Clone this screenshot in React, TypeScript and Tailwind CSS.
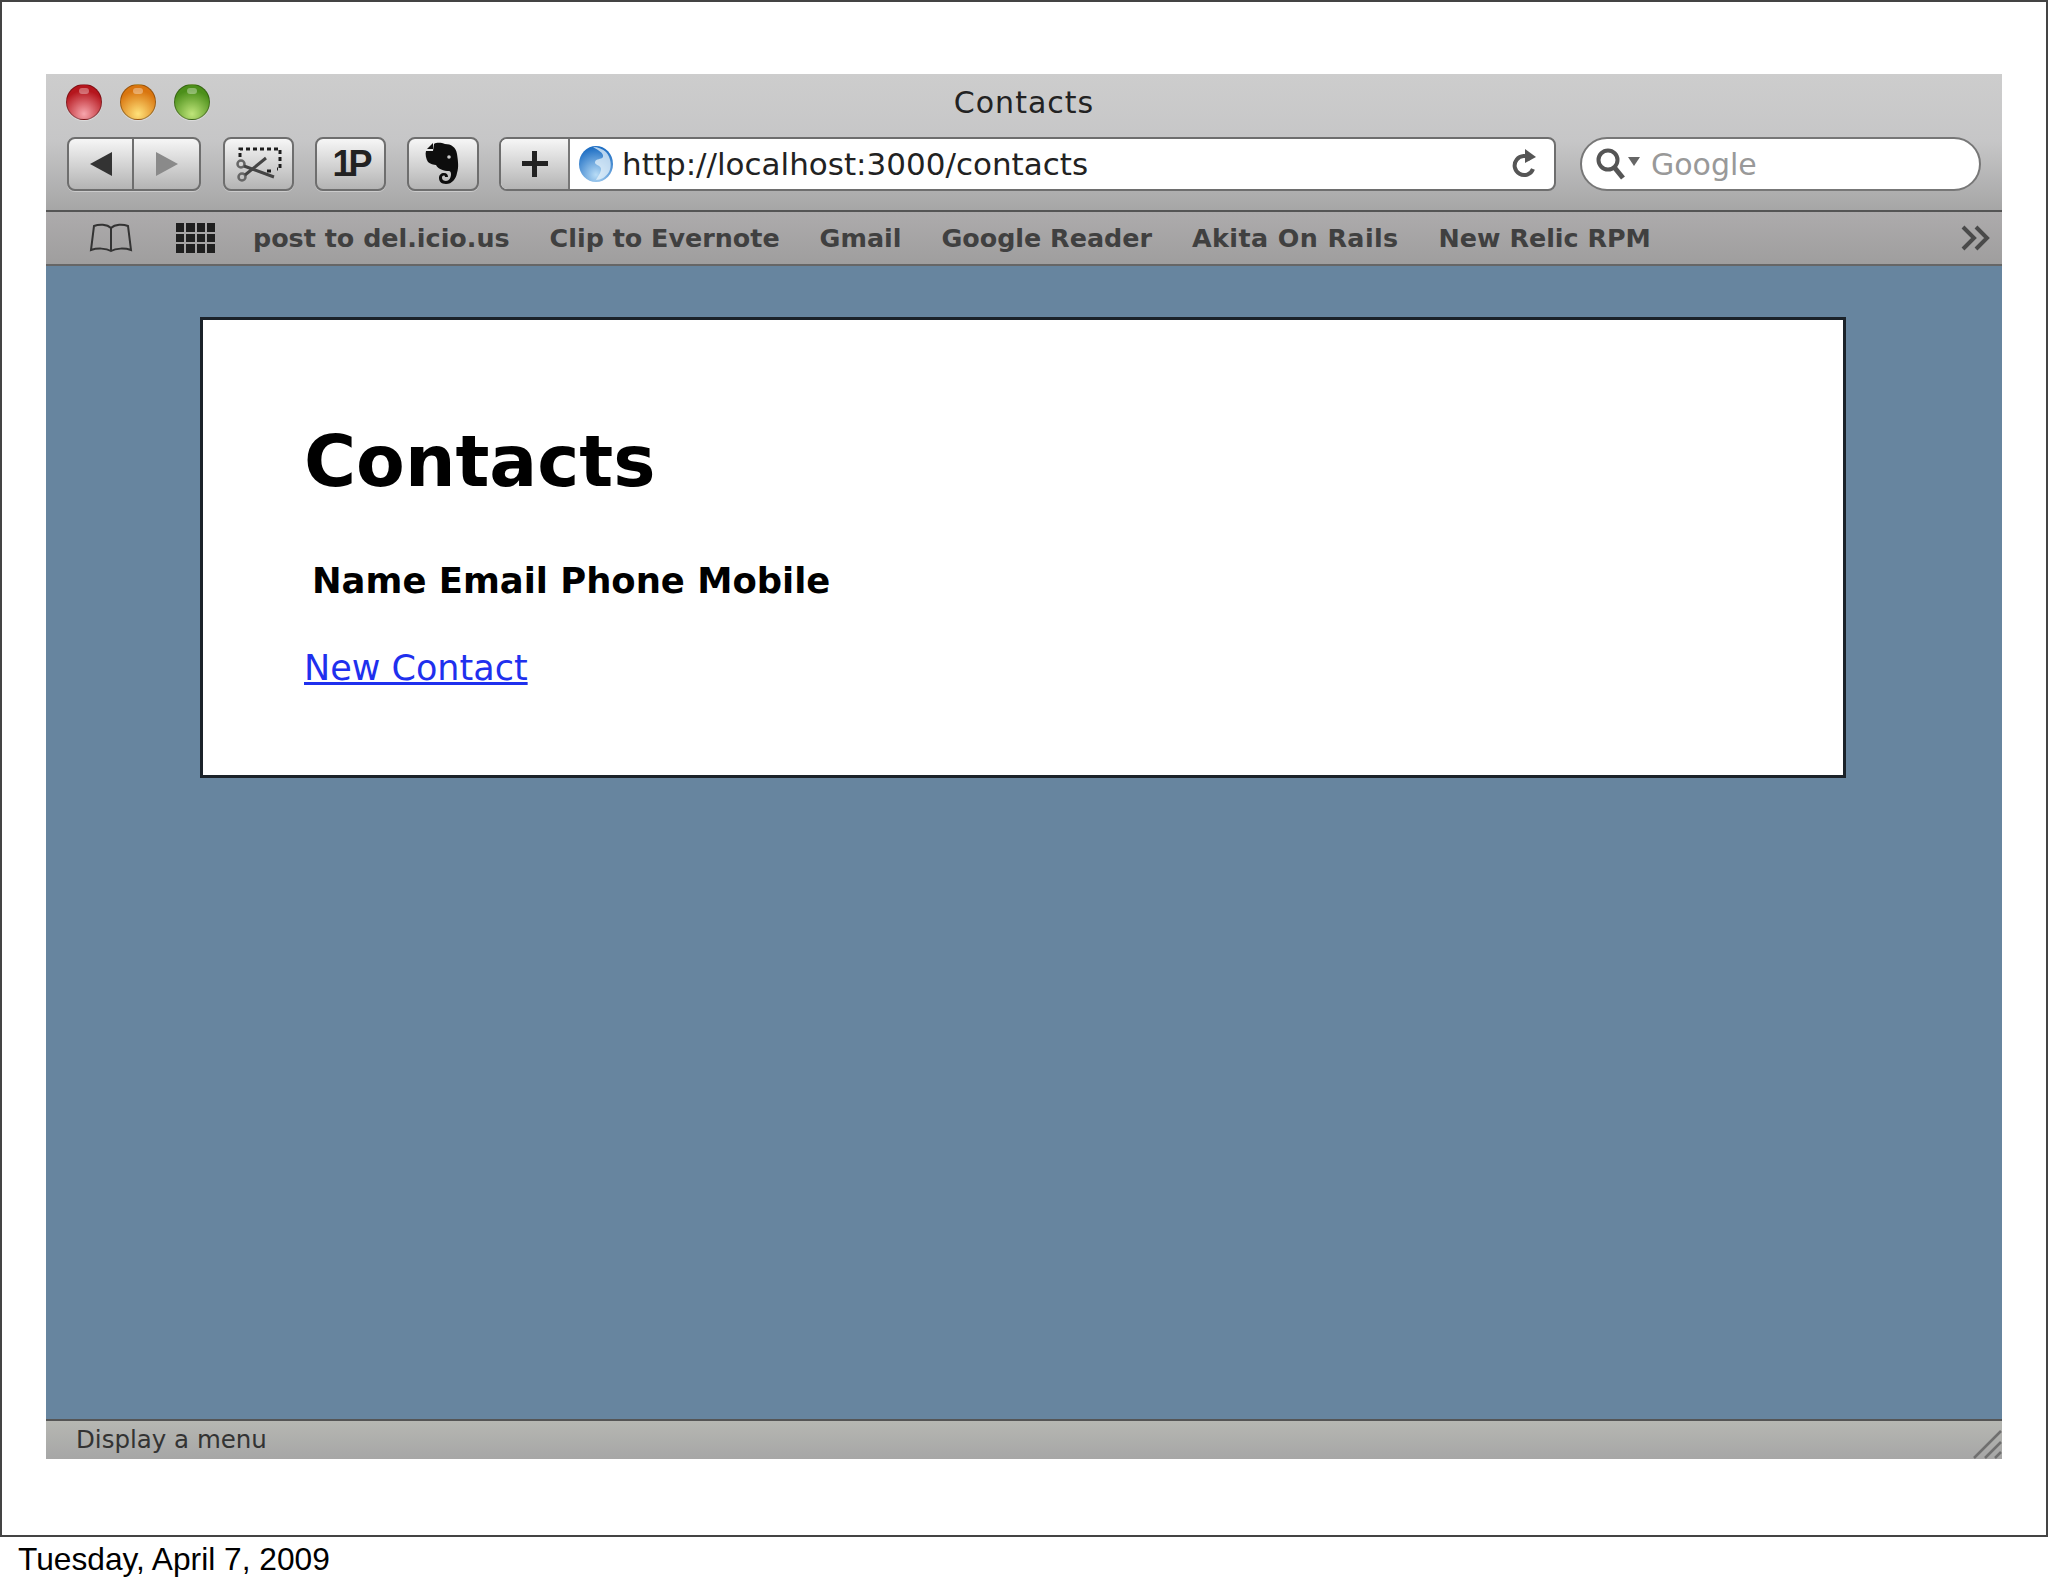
const ui = "font-['DejaVu_Sans',sans-serif]"

const bookmarks = [
  { label: "post to del.icio.us", cls: "" },
  { label: "Clip to Evernote", cls: "" },
  { label: "Gmail", cls: "" },
  { label: "Google Reader", cls: "" },
  { label: "Akita On Rails", cls: "tracking-[0.4px]" },
  { label: "New Relic RPM", cls: "" },
]

const Light = ({ from, to }: { from: string; to: string }) => (
  <div
    className="relative w-[36px] h-[36px] rounded-full border border-black/30 shadow-[0_1px_1px_rgba(255,255,255,0.4)]"
    style={{ background: `radial-gradient(circle at 50% 85%, ${to} 0%, ${from} 70%)` }}
  >
    <div className="absolute left-[12px] top-[3px] w-[10px] h-[6px] rounded-full bg-white/35" />
  </div>
)

const btn = "h-[54px] rounded-[8px] border-2 border-[#6e6e6e] bg-gradient-to-b from-[#f6f6f6] to-[#b4b4b4] flex items-center justify-center shadow-[0_1px_0_rgba(255,255,255,0.35)]"

const Scissors = () => (
  <svg width="48" height="36" viewBox="0 0 48 36" fill="none" stroke="#444">
    <path d="M5 11V3h40v20h-3M36 25h-4" strokeWidth="3" strokeDasharray="4 3" stroke="#1d1d1d" />
    <circle cx="6" cy="18" r="3.5" strokeWidth="2.5" stroke="#666" />
    <circle cx="7" cy="31" r="3.5" strokeWidth="2.5" stroke="#666" />
    <path d="M9 20l30 11M10 29L31 12" strokeWidth="3" />
  </svg>
)

const Elephant = () => (
  <svg width="36" height="44" viewBox="0 0 36 44" fill="#0d0d0d">
    <path d="M9 2c3-2 8-1 11 0 6 0 11 3 12 10 1 7 2 13 0 19-1 6-5 11-11 11-5 0-7-3-7-6 0-3 2-5 5-5 3 0 4 2 4 4h-3c0-2-3-2-3 1 0 2 2 3 4 3 3 0 5-3 5-7 0-2-1-3-2-3-5 0-11-2-13-6-2 0-6-1-8-3C1 17 0 12 1 9h7z" />
    <path d="M2 7l6-6v6z" />
    <circle cx="24" cy="15" r="1.8" fill="#ccc" />
  </svg>
)

const Globe = () => (
  <svg width="36" height="38" viewBox="0 0 36 38">
    <defs>
      <radialGradient id="gl" cx="50%" cy="80%" r="75%">
        <stop offset="0%" stopColor="#b8dcf6" />
        <stop offset="100%" stopColor="#1f6fc4" />
      </radialGradient>
    </defs>
    <ellipse cx="18" cy="19" rx="17" ry="18" fill="url(#gl)" />
    <path d="M15 2c5 3 11 6 10 10-2 3-7 1-8 5-1 3 6 3 6 7 0 4-3 7-5 11 5 0 10-3 13-8 3-6 2-14-3-20-3-3-8-5-13-5z" fill="#e6f1fa" opacity=".75" />
  </svg>
)

const Reload = () => (
  <svg width="28" height="32" viewBox="0 0 28 32" fill="none">
    <path d="M21 11a9.5 9.5 0 1 0 2 10" stroke="#555" strokeWidth="4" />
    <path d="M15 1l11 8-11 6z" fill="#555" />
  </svg>
)

const Search = () => (
  <svg width="46" height="34" viewBox="0 0 46 34" fill="none">
    <circle cx="13" cy="13" r="9.5" stroke="#555" strokeWidth="4" />
    <path d="M19 20l9 11" stroke="#555" strokeWidth="5" />
    <path d="M33 10h12l-6 9z" fill="#666" />
  </svg>
)

const Book = () => (
  <svg width="44" height="30" viewBox="0 0 44 30" fill="none" stroke="#333" strokeWidth="2">
    <path d="M22 5C18 1 10 1 5 3L2 27c6-2 15-2 20 1 5-3 14-3 20-1L39 3c-5-2-13-2-17 2zM22 5v23" />
  </svg>
)

const Grid = () => (
  <div className="grid grid-cols-4 grid-rows-3 gap-[2px] w-[39px] h-[30px]">
    {Array.from({ length: 12 }).map((_, i) => (
      <div key={i} className="bg-[#1f1f1f]" />
    ))}
  </div>
)

const Chevrons = () => (
  <svg width="32" height="26" viewBox="0 0 32 26" fill="none" stroke="#4a4a4a" strokeWidth="4">
    <path d="M2 2l11 11L2 24M15 2l11 11-11 11" />
  </svg>
)

const Grip = () => (
  <svg width="30" height="30" viewBox="0 0 30 30" stroke="#6f6f6f" strokeWidth="2.5">
    <path d="M2 29L29 2M13 29L29 13M23 29l6-6" />
  </svg>
)

const App = () => {
  return (
    <div className={`w-[2048px] h-[1587px] bg-white overflow-hidden ${ui}`}>
      <div className="h-[1537px] border-2 border-[#444] pt-[72px] px-[44px]">
        <div className="w-[1956px] h-[1385px] flex flex-col">
          <div className="relative h-[138px] shrink-0 bg-gradient-to-b from-[#cdcdcd] via-[#c6c6c7] to-[#a6a6a6] border-b-2 border-[#555] pl-[21px] pt-[10px]">
            <div className="flex gap-[18px] -ml-[1px]">
              <Light from="#b5161d" to="#f7a6ad" />
              <Light from="#d9750f" to="#ffe27a" />
              <Light from="#4c8f1a" to="#bfe57a" />
            </div>
            <div className="absolute left-0 right-0 top-[11px] text-center text-[30px] tracking-[1px] leading-[36px] text-[#222]">Contacts</div>

            <div className="flex mt-[17px]">
              <div className={`${btn} w-[134px] !justify-start !p-0`}>
                <div className="w-[65px] h-full flex items-center justify-center border-r-2 border-[#6e6e6e]">
                  <div className="w-0 h-0 border-y-[12px] border-y-transparent border-r-[22px] border-r-[#333]" />
                </div>
                <div className="flex-1 flex items-center justify-center">
                  <div className="w-0 h-0 border-y-[12px] border-y-transparent border-l-[22px] border-l-[#8a8a8a]" />
                </div>
              </div>
              <div className={`${btn} w-[71px] ml-[22px]`}><Scissors /></div>
              <div className={`${btn} w-[71px] ml-[21px] font-['Liberation_Sans',sans-serif] text-[36px] font-bold text-[#222] tracking-[-4px]`}>1P</div>
              <div className={`${btn} w-[72px] ml-[21px]`}><Elephant /></div>
              <div className="ml-[20px] w-[1057px] h-[54px] flex rounded-[8px] border-2 border-[#6e6e6e] overflow-hidden bg-white">
                <div className="w-[69px] h-full bg-gradient-to-b from-[#f6f6f6] to-[#b4b4b4] border-r-2 border-[#777] flex items-center justify-center text-[#222]">
                  <div className="relative w-[26px] h-[26px]">
                    <div className="absolute left-[10px] top-0 w-[5px] h-[26px] bg-[#222]" />
                    <div className="absolute left-0 top-[10px] h-[5px] w-[26px] bg-[#222]" />
                  </div>
                </div>
                <div className="flex-1 flex items-center pl-[8px] pr-[16px]">
                  <Globe />
                  <span className="ml-[8px] text-[31px] text-[#222] whitespace-nowrap">http://localhost:3000/contacts</span>
                  <div className="ml-auto"><Reload /></div>
                </div>
              </div>
              <div className="ml-[24px] w-[401px] h-[54px] rounded-full border-2 border-[#777] bg-white flex items-center pl-[13px]">
                <Search />
                <span className="ml-[10px] text-[30px] text-[#999]">Google</span>
              </div>
            </div>
          </div>

          <div className="h-[54px] shrink-0 bg-gradient-to-b from-[#adabac] to-[#9f9e9e] border-b-2 border-[#666] flex items-center pl-[43px] pr-[9px]">
            <Book />
            <div className="ml-[43px]"><Grid /></div>
            <div className="ml-[38px] flex gap-[40px] text-[25.4px] font-bold text-[#404040] whitespace-nowrap">
              {bookmarks.map((b) => (
                <span key={b.label} className={b.cls}>{b.label}</span>
              ))}
            </div>
            <div className="ml-auto"><Chevrons /></div>
          </div>

          <div className="flex-1 bg-[#67859f] pt-[51px] pl-[154px] pr-[156px]">
            <div className="h-[461px] bg-white border-[3px] border-[#1b2229] pl-[101px] pt-[102px]">
              <h1 className="text-[71px] leading-[80px] font-bold text-black">Contacts</h1>
              <table className="mt-[57px] text-[35.4px] font-bold text-black">
                <thead>
                  <tr>
                    <th className="px-[8px] pb-0 leading-[44px] font-bold">Name Email Phone Mobile</th>
                  </tr>
                </thead>
              </table>
              <a href="#" className="block mt-[43px] w-fit text-[35px] leading-[44px] text-[#1f30ee] underline">New Contact</a>
            </div>
          </div>

          <div className="relative h-[40px] shrink-0 bg-gradient-to-b from-[#b6b7b2] to-[#a6a6a6] border-t-2 border-[#555] flex items-center pl-[30px] text-[24.5px] text-[#333]">
            Display a menu
            <div className="absolute right-0 bottom-0"><Grip /></div>
          </div>
        </div>
      </div>
      <div className="pl-[18px] pt-[4px] text-[31.7px] leading-[36px] text-black font-['Liberation_Sans',sans-serif]">Tuesday, April 7, 2009</div>
    </div>
  )
}

export default App
